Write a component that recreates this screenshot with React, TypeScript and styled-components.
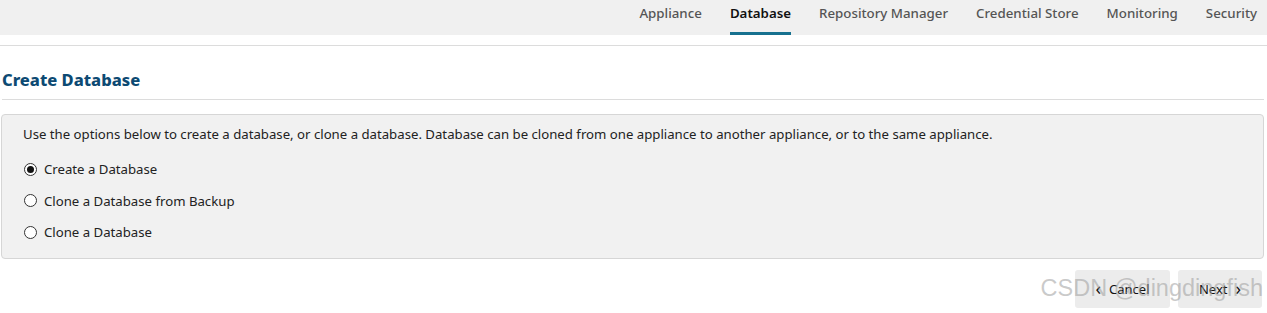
import React, { useState } from 'react';
import styled, { createGlobalStyle } from 'styled-components';

const GlobalStyle = createGlobalStyle`
  html, body {
    margin: 0;
    padding: 0;
    background: #ffffff;
    font-family: 'Noto Sans', 'Open Sans', sans-serif;
    color: #222;
  }
`;

const tabs = [
  'Appliance',
  'Database',
  'Repository Manager',
  'Credential Store',
  'Monitoring',
  'Security',
];

const options = [
  'Create a Database',
  'Clone a Database from Backup',
  'Clone a Database',
];

const App = () => {
  const [active, setActive] = useState('Database');
  const [choice, setChoice] = useState(options[0]);

  return (
    <Page>
      <GlobalStyle />
      <TopBar>
        <Tabs>
          {tabs.map((t) => (
            <Tab key={t} $active={t === active} onClick={() => setActive(t)}>
              {t}
            </Tab>
          ))}
        </Tabs>
      </TopBar>
      <Divider />

      <Title>Create Database</Title>
      <TitleRule />

      <Panel>
        <Description>
          Use the options below to create a database, or clone a database.
          Database can be cloned from one appliance to another appliance, or to
          the same appliance.
        </Description>
        <OptionList>
          {options.map((o) => (
            <Option key={o}>
              <Radio $checked={choice === o} onClick={() => setChoice(o)} />
              <span>{o}</span>
            </Option>
          ))}
        </OptionList>
      </Panel>

      <Footer>
        <NavButton>
          <Chevron>&lsaquo;</Chevron>
          Cancel
        </NavButton>
        <NavButton>
          Next
          <Chevron>&rsaquo;</Chevron>
        </NavButton>
        <Watermark>CSDN @dingdingfish</Watermark>
      </Footer>
    </Page>
  );
};

export default App;

const Page = styled.div`
  width: 1267px;
  height: 313px;
  overflow: hidden;
`;

const TopBar = styled.div`
  height: 35px;
  background: #f0f0f0;
  display: flex;
  justify-content: flex-end;
`;

const Tabs = styled.div`
  display: flex;
  gap: 28px;
  padding-right: 10px;
`;

const Tab = styled.div<{ $active?: boolean }>`
  height: 35px;
  box-sizing: border-box;
  padding-top: 4px;
  font-size: 13.3px;
  color: ${({ $active }) => ($active ? '#111' : '#555')};
  font-weight: ${({ $active }) => ($active ? 600 : 500)};
  border-bottom: 3px solid
    ${({ $active }) => ($active ? '#17718f' : 'transparent')};
  cursor: pointer;
  white-space: nowrap;
`;

const Divider = styled.div`
  margin-top: 10px;
  height: 1px;
  background: #dcdcdc;
`;

const Title = styled.h2`
  margin: 23px 0 0 2px;
  font-family: 'Noto Sans', sans-serif;
  font-weight: 800;
  font-size: 16.5px;
  line-height: 22px;
  color: #0d4a73;
`;

const TitleRule = styled.div`
  margin: 8px 3px 0 2px;
  height: 1px;
  background: #dcdcdc;
`;

const Panel = styled.div`
  margin: 14px 3px 0 1px;
  height: 145px;
  box-sizing: border-box;
  background: #f1f1f1;
  border: 1px solid #d6d6d6;
  border-radius: 4px;
  padding: 10px 21px 9px;
`;

const Description = styled.p`
  margin: 0;
  font-size: 13.2px;
  line-height: 18px;
  color: #222;
`;

const OptionList = styled.div`
  display: flex;
  flex-direction: column;
  gap: 13.5px;
  margin-top: 17px;
`;

const Option = styled.label`
  display: flex;
  align-items: center;
  gap: 7px;
  height: 18px;
  font-size: 13.2px;
  color: #222;
`;

const Radio = styled.span<{ $checked?: boolean }>`
  width: 13px;
  height: 13px;
  box-sizing: border-box;
  margin-left: 1px;
  border: 1px solid #333;
  border-radius: 50%;
  background: #fff;
  display: flex;
  align-items: center;
  justify-content: center;
  cursor: pointer;

  &::after {
    content: '';
    width: 7px;
    height: 7px;
    border-radius: 50%;
    background: ${({ $checked }) => ($checked ? '#111' : 'transparent')};
  }
`;

const Footer = styled.div`
  position: relative;
  display: flex;
  justify-content: flex-end;
  gap: 8px;
  margin-top: 11px;
  padding-right: 5px;
`;

const NavButton = styled.button`
  width: 95px;
  height: 38px;
  border: none;
  border-radius: 3px;
  background: #ececec;
  font-family: 'Noto Sans', sans-serif;
  font-size: 13px;
  color: #111;
  display: flex;
  align-items: center;
  justify-content: center;
  gap: 8px;

  &:last-of-type {
    width: 84px;
  }
`;

const Chevron = styled.span`
  font-size: 18px;
  line-height: 1;
  margin-top: -3px;
`;

const Watermark = styled.div`
  position: absolute;
  right: 4px;
  top: 5px;
  font-family: 'Liberation Sans', Arial, sans-serif;
  font-size: 23.5px;
  color: rgba(150, 150, 150, 0.5);
  pointer-events: none;
  white-space: nowrap;
`;
